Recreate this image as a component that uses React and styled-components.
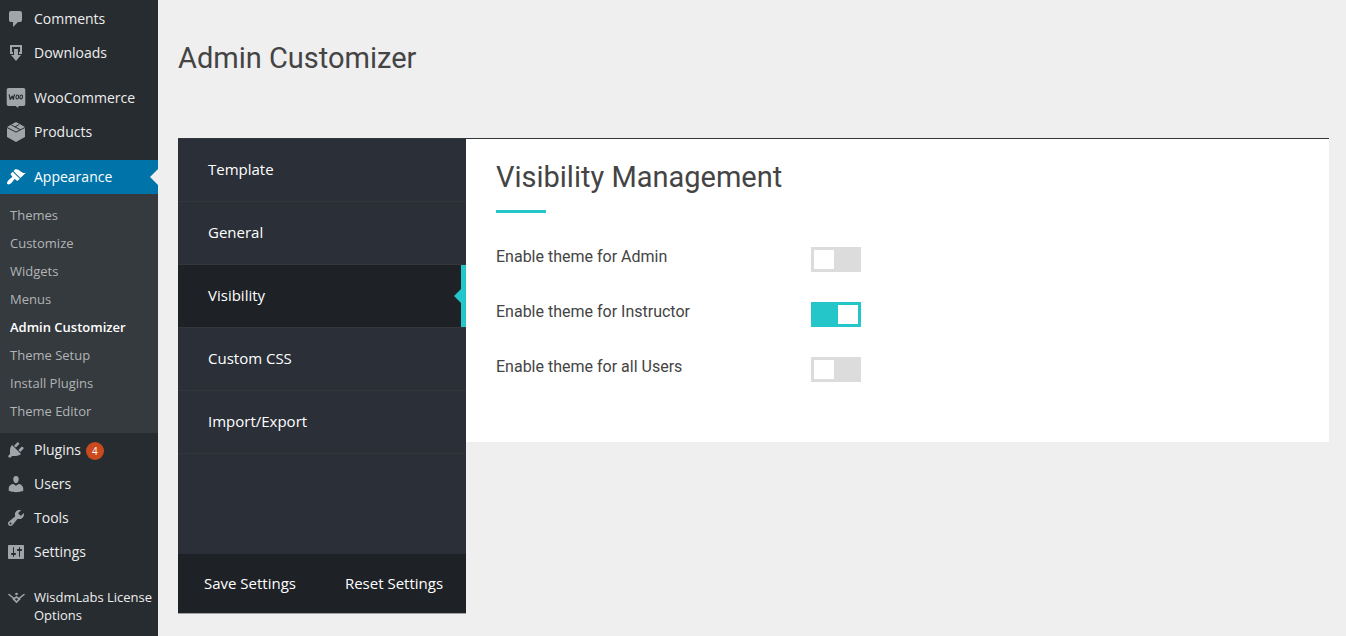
import React, { useState } from 'react';
import styled, { createGlobalStyle, css } from 'styled-components';

const UI_FONT = '"Open Sans", "Noto Sans", sans-serif';
const HEADING_FONT = 'Roboto, "Noto Sans", sans-serif';
const TEAL = '#25c6c9';

const GlobalStyle = createGlobalStyle`
  *, *::before, *::after { box-sizing: border-box; }
  body {
    margin: 0;
    background: #efefef;
    color: #444;
    font-family: ${UI_FONT};
    font-size: 14px;
  }
  h1, h2, p, ul { margin: 0; padding: 0; }
  ul { list-style: none; }
  a { color: inherit; text-decoration: none; }
`;

const Page = styled.div`
  display: flex;
  min-height: 100vh;
`;

const Sidebar = styled.nav`
  flex: 0 0 158px;
  min-width: 0;
  padding-top: 2px;
  background: #272c30;
`;

const MenuItem = styled.li`
  margin-top: ${(p) => (p.$spaced ? '11px' : '0')};
`;

const MenuLink = styled.a`
  position: relative;
  display: flex;
  align-items: flex-start;
  gap: 8px;
  padding: 7px 0 7px 6px;
  line-height: 18px;
  color: #eee;
  ${(p) =>
    p.$current &&
    css`
      background: #0074a9;
      color: #fff;
      &::after {
        content: '';
        position: absolute;
        top: 9px;
        right: 0;
        border: 8px solid transparent;
        border-left: 0;
        border-right-color: #efefef;
      }
    `}
`;

const MenuIcon = styled.svg`
  flex: none;
  width: 20px;
  height: 20px;
  fill: ${(p) => (p.$current ? '#fff' : '#a0a5aa')};
`;

const MenuLabel = styled.span`
  flex: 1;
  padding-top: 1px;
  font-size: ${(p) => (p.$long ? '13px' : '14px')};
`;

const Badge = styled.span`
  display: inline-block;
  width: 18px;
  height: 18px;
  margin: 1px 0 0 5px;
  border-radius: 50%;
  background: #ca4a1f;
  color: #fff;
  font-size: 10px;
  line-height: 18px;
  text-align: center;
  vertical-align: top;
`;

const Submenu = styled.ul`
  padding: 7px 0 8px;
  background: #353a3e;
`;

const SubmenuLink = styled.a`
  display: block;
  padding: 5px 10px;
  font-size: 13px;
  line-height: 18px;
  white-space: nowrap;
  color: ${(p) => (p.$current ? '#fff' : '#b1b4b6')};
  font-weight: ${(p) => (p.$current ? 600 : 400)};
`;

const Content = styled.main`
  flex: 1;
  min-width: 0;
  padding: 38px 17px 20px 20px;
`;

const PageTitle = styled.h1`
  font: 400 29px/40px ${HEADING_FONT};
`;

const Customizer = styled.div`
  display: flex;
  align-items: flex-start;
  margin-top: 60px;
  border-top: 1px solid #32373c;
`;

const Tabs = styled.div`
  flex: 0 0 288px;
  display: flex;
  flex-direction: column;
  background: #2b2f38;
  border-bottom: 1px solid #a0a3a6;
`;

const TabList = styled.ul`
  padding-bottom: 100px;
`;

const TabLink = styled.a`
  position: relative;
  display: block;
  padding: 19px 30px 21px;
  border-bottom: 1px solid #34373a;
  font-size: 15px;
  line-height: 22px;
  color: #fff;
  ${(p) =>
    p.$current &&
    css`
      background: #1e2126;
      box-shadow: inset -5px 0 0 ${TEAL};
      &::after {
        content: '';
        position: absolute;
        top: 24px;
        right: 5px;
        border: 7px solid transparent;
        border-left: 0;
        border-right-color: ${TEAL};
      }
    `}
`;

const TabActions = styled.div`
  display: flex;
  background: #1e2126;
`;

const ActionButton = styled.button`
  flex: 1;
  padding: 18px 0;
  border: 0;
  background: none;
  color: #fff;
  font: 400 15px/23px ${UI_FONT};
  cursor: pointer;
`;

const Panel = styled.section`
  flex: 1;
  min-width: 0;
  padding: 18px 30px 60px;
  background: #fff;
`;

const PanelTitle = styled.h2`
  font: 400 29px/40px ${HEADING_FONT};
  &::after {
    content: '';
    display: block;
    width: 50px;
    height: 3px;
    margin-top: 13px;
    background: ${TEAL};
  }
`;

const Settings = styled.div`
  display: flex;
  flex-direction: column;
  gap: 30px;
  margin-top: 34px;
`;

const SettingRow = styled.div`
  display: flex;
  align-items: flex-start;
`;

const SettingLabel = styled.label`
  flex: 0 1 315px;
  font: 400 16px/20px ${HEADING_FONT};
`;

const Toggle = styled.input`
  appearance: none;
  flex: none;
  display: flex;
  width: 50px;
  height: 25px;
  margin: 0;
  padding: 3px;
  background: #dcdcdc;
  cursor: pointer;
  &::before {
    content: '';
    width: 20px;
    height: 19px;
    background: #fff;
  }
  &:checked {
    justify-content: flex-end;
    background: ${TEAL};
  }
`;

const icons = {
  comments: (
    <path d="M5 2h9q.82 0 1.410.59T16 4v7q0 .82-.59 1.410T14 13h-2l-5 5v-5H5q-.82 0-1.410-.59T3 11V4q0-.82.59-1.410T5 2z" />
  ),
  downloads: (
    <path d="M4 2h12v9h-3V9h1V4H6v5h1v2H4zM8 6h4v6h3l-5 6-5-6h3z" />
  ),
  woo: (
    <>
      <path d="M2.500 0h15A1.800 1.800 0 0 1 19.300 1.800v14.400A1.800 1.800 0 0 1 17.500 18h-5l-.3 2-2.600-2H2.500A1.800 1.800 0 0 1 .7 16.200V1.800A1.800 1.800 0 0 1 2.500 0z" />
      <path
        d="M3.200 6.800l1.100 4.700 1.900-3.400 1.200 3.400q.2-3 1.100-4.800"
        fill="none"
        stroke="#272c30"
        strokeWidth="1.200"
        strokeLinejoin="round"
        strokeLinecap="round"
      />
      <g fill="none" stroke="#272c30" strokeWidth="1.100">
        <ellipse cx="11.300" cy="9" rx="1.300" ry="2" transform="rotate(10 11.300 9)" />
        <ellipse cx="15.200" cy="9" rx="1.300" ry="2" transform="rotate(10 15.200 9)" />
      </g>
    </>
  ),
  products: (
    <>
      <path d="M10 0l9 5v10l-9 5-9-5V5z" />
      <path
        d="M1 5.500l9 4.600 9-4.600M5.500 3l8.500 4.600M9 5l4-2.500"
        fill="none"
        stroke="#272c30"
        strokeWidth="1"
      />
    </>
  ),
  appearance: (
    <path d="M14.480 11.060L7.410 3.990l1.500-1.500c.5-.56 2.300-.47 3.510.32 1.210.8 1.430 1.280 2.910 2.100 1.180.64 2.450 1.260 4.450.85zm-.71.71L6.700 4.700 4.930 6.470c-.39.39-.39 1.020 0 1.410l1.060 1.060c.39.39.39 1.030 0 1.420-.6.6-1.430 1.110-2.210 1.690-.35.26-.7.53-1.010.84C1.430 14.230.4 16.080 1.400 17.070c.99 1 2.840-.03 4.180-1.360.31-.31.58-.66.85-1.020.57-.78 1.080-1.610 1.690-2.210.39-.39 1.020-.39 1.410 0l1.060 1.060c.39.39 1.020.39 1.410 0z" />
  ),
  plugins: (
    <path d="M13.110 4.360L9.870 7.600 8 5.730l3.240-3.240c.35-.34 1.050-.2 1.560.32.52.51.66 1.210.31 1.550zm-8 1.770l.91-1.120 9.010 9.010-1.190.84c-.71.71-2.630 1.160-3.820 1.160H6.140L4.900 17.260c-.59.59-1.540.59-2.120 0-.59-.58-.59-1.530 0-2.120l1.240-1.240v-3.880c0-1.130.4-3.190 1.090-3.890zm7.260 3.970l3.240-3.240c.34-.35 1.040-.21 1.550.31.52.51.66 1.210.31 1.550l-3.240 3.250z" />
  ),
  users: (
    <path d="M10 9.250c-2.270 0-2.730-3.440-2.730-3.440C7 4.020 7.820 2 9.970 2c2.160 0 2.980 2.020 2.710 3.810 0 0-.41 3.440-2.680 3.440zm0 2.570L12.720 10c2.390 0 4.520 2.330 4.520 4.530v2.490s-3.650 1.130-7.240 1.130c-3.650 0-7.240-1.130-7.240-1.130v-2.490c0-2.250 1.940-4.480 4.470-4.480z" />
  ),
  tools: (
    <path d="M16.680 9.770c-1.340 1.340-3.300 1.670-4.950.99l-5.410 6.520c-.99.99-2.590.99-3.580 0s-.99-2.590 0-3.570l6.520-5.420c-.68-1.650-.35-3.610.99-4.950 1.280-1.280 3.120-1.620 4.720-1.060l-2.890 2.890 2.820 2.820 2.860-2.870c.53 1.580.18 3.390-1.080 4.650zM3.810 16.210c.4.39 1.040.39 1.430 0 .4-.4.4-1.040 0-1.430-.39-.4-1.030-.4-1.430 0-.39.39-.39 1.030 0 1.430z" />
  ),
  settings: (
    <path d="M18 16V4c0-.55-.45-1-1-1H3c-.55 0-1 .45-1 1v12c0 .55.45 1 1 1h14c.55 0 1-.45 1-1zM8 11h1c.55 0 1 .45 1 1s-.45 1-1 1H8v1.500c0 .28-.22.5-.5.5s-.5-.22-.5-.5V13H6c-.55 0-1-.45-1-1s.45-1 1-1h1V5.500c0-.28.22-.5.5-.5s.5.22.5.5V11zm5-2h-1c-.55 0-1-.45-1-1s.45-1 1-1h1V5.500c0-.28.22-.5.5-.5s.5.22.5.5V7h1c.55 0 1 .45 1 1s-.45 1-1 1h-1v5.500c0 .28-.22.5-.5.5s-.5-.22-.5-.5V9z" />
  ),
  wisdm: (
    <>
      <path
        d="M3 7.500l5.500 4.500M18 7.500L12.500 12M7.500 12l3-2 3 2-3 3z"
        fill="none"
        stroke="#a0a5aa"
        strokeWidth="1.600"
        strokeLinecap="round"
      />
      <circle cx="10.500" cy="7" r="1.300" />
    </>
  ),
};

const menu = [
  { icon: 'comments', label: 'Comments' },
  { icon: 'downloads', label: 'Downloads' },
  { icon: 'woo', label: 'WooCommerce', spaced: true },
  { icon: 'products', label: 'Products' },
  {
    icon: 'appearance',
    label: 'Appearance',
    spaced: true,
    current: true,
    children: [
      'Themes',
      'Customize',
      'Widgets',
      'Menus',
      'Admin Customizer',
      'Theme Setup',
      'Install Plugins',
      'Theme Editor',
    ],
  },
  { icon: 'plugins', label: 'Plugins', badge: 4 },
  { icon: 'users', label: 'Users' },
  { icon: 'tools', label: 'Tools' },
  { icon: 'settings', label: 'Settings' },
  { icon: 'wisdm', label: 'WisdmLabs License Options', spaced: true, long: true },
];

const tabs = ['Template', 'General', 'Visibility', 'Custom CSS', 'Import/Export'];

const settings = [
  { id: 'admin', label: 'Enable theme for Admin' },
  { id: 'instructor', label: 'Enable theme for Instructor' },
  { id: 'users', label: 'Enable theme for all Users' },
];

export default function App() {
  const [tab, setTab] = useState('Visibility');
  const [enabled, setEnabled] = useState({ admin: false, instructor: true, users: false });

  return (
    <>
      <GlobalStyle />
      <Page>
        <Sidebar aria-label="Main menu">
          <ul>
            {menu.map((item) => (
              <MenuItem key={item.label} $spaced={item.spaced}>
                <MenuLink href="#" $current={item.current}>
                  <MenuIcon viewBox="0 0 20 20" aria-hidden="true" $current={item.current}>
                    {icons[item.icon]}
                  </MenuIcon>
                  <MenuLabel $long={item.long}>
                    {item.label}
                    {item.badge && <Badge>{item.badge}</Badge>}
                  </MenuLabel>
                </MenuLink>
                {item.children && (
                  <Submenu>
                    {item.children.map((name) => (
                      <li key={name}>
                        <SubmenuLink href="#" $current={name === 'Admin Customizer'}>
                          {name}
                        </SubmenuLink>
                      </li>
                    ))}
                  </Submenu>
                )}
              </MenuItem>
            ))}
          </ul>
        </Sidebar>
        <Content>
          <PageTitle>Admin Customizer</PageTitle>
          <Customizer>
            <Tabs>
              <TabList>
                {tabs.map((name) => (
                  <li key={name}>
                    <TabLink href="#" $current={name === tab} onClick={() => setTab(name)}>
                      {name}
                    </TabLink>
                  </li>
                ))}
              </TabList>
              <TabActions>
                <ActionButton type="button">Save Settings</ActionButton>
                <ActionButton type="button">Reset Settings</ActionButton>
              </TabActions>
            </Tabs>
            <Panel>
              <PanelTitle>Visibility Management</PanelTitle>
              <Settings>
                {settings.map(({ id, label }) => (
                  <SettingRow key={id}>
                    <SettingLabel htmlFor={id}>{label}</SettingLabel>
                    <Toggle
                      id={id}
                      type="checkbox"
                      checked={enabled[id]}
                      onChange={(e) => setEnabled({ ...enabled, [id]: e.target.checked })}
                    />
                  </SettingRow>
                ))}
              </Settings>
            </Panel>
          </Customizer>
        </Content>
      </Page>
    </>
  );
}
